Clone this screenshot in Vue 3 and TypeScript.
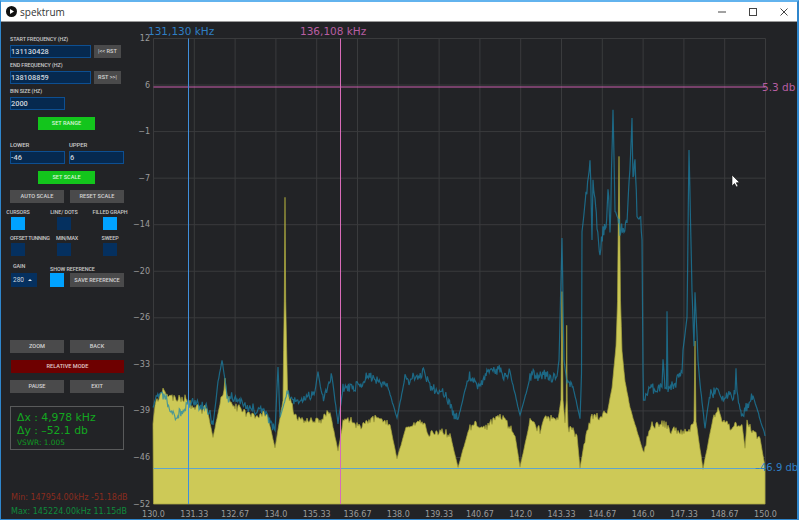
<template>
  <div class="window">
    <header class="titlebar">
      <svg class="app-icon" width="11" height="11" viewBox="0 0 11 11">
        <circle cx="5.5" cy="5.5" r="5.5" fill="#111" />
        <path d="M4 3 L8 5.5 L4 8 Z" fill="#fff" />
      </svg>
      <span class="app-name">spektrum</span>
      <div class="win-buttons">
        <svg width="10" height="10" viewBox="0 0 10 10"><path d="M1 5H9" stroke="#444" fill="none" /></svg>
        <svg width="10" height="10" viewBox="0 0 10 10"><rect x="1.5" y="1.5" width="7" height="7" stroke="#444" fill="none" /></svg>
        <svg width="10" height="10" viewBox="0 0 10 10"><path d="M1.5 1.5L8.5 8.5M8.5 1.5L1.5 8.5" stroke="#444" fill="none" /></svg>
      </div>
    </header>

    <main class="body">
      <aside class="side">
        <label class="lbl first">START FREQUENCY (HZ)</label>
        <div class="row">
          <div class="input wide">131130428</div>
          <button class="btn rst">|&lt;&lt; RST</button>
        </div>
        <label class="lbl">END FREQUENCY (HZ)</label>
        <div class="row">
          <div class="input wide">138108859</div>
          <button class="btn rst">RST &gt;&gt;|</button>
        </div>
        <label class="lbl">BIN SIZE (HZ)</label>
        <div class="input half">2000</div>
        <button class="btn green">SET RANGE</button>

        <div class="row two lbl-row">
          <label class="lbl">LOWER</label>
          <label class="lbl">UPPER</label>
        </div>
        <div class="row two">
          <div class="input half">-46</div>
          <div class="input half">6</div>
        </div>
        <button class="btn green second">SET SCALE</button>

        <div class="row pair scale">
          <button class="btn">AUTO SCALE</button>
          <button class="btn">RESET SCALE</button>
        </div>

        <div v-for="(line, i) in checks" :key="i" class="checks">
          <div v-for="c in line" :key="c.name" class="check" :class="{ left: c.left }">
            <span class="lbl">{{ c.name }}</span>
            <span class="box" :class="{ on: c.on }"></span>
          </div>
        </div>

        <div class="gain-row">
          <div class="gain">
            <span class="lbl">GAIN</span>
            <div class="combo">280 <i class="up"></i></div>
          </div>
          <div class="ref">
            <span class="lbl">SHOW REFERENCE</span>
            <div class="ref-line">
              <span class="box on tall"></span>
              <button class="btn save">SAVE REFERENCE</button>
            </div>
          </div>
        </div>

        <div class="row pair zoom">
          <button class="btn">ZOOM</button>
          <button class="btn">BACK</button>
        </div>
        <button class="btn red">RELATIVE MODE</button>
        <div class="row pair pause">
          <button class="btn">PAUSE</button>
          <button class="btn">EXIT</button>
        </div>

        <div class="delta">
          <div class="big">Δx : 4,978 kHz</div>
          <div class="big">Δy : –52.1 db</div>
          <div class="vswr">VSWR: 1.005</div>
        </div>

        <div class="min">Min: 147954.00kHz -51.18dB</div>
        <div class="max">Max: 145224.00kHz 11.15dB</div>
      </aside>

      <svg class="plot" width="672" height="498" viewBox="125 21 672 498">
        <g stroke="#3a3b3d" stroke-width="1">
          <line v-for="x in xTicks" :key="x.label" :x1="x.pos" y1="37.5" :x2="x.pos" y2="503" />
          <line v-for="y in yTicks" :key="y.label" x1="153.5" :y1="y.pos" x2="765.5" :y2="y.pos" />
        </g>

        <path :d="yellowPath" fill="#cdc957" stroke="#a6a33c" stroke-width="0.7" />
        <path :d="bluePath" fill="none" stroke="#1b84ab" stroke-width="1.2" stroke-opacity="0.72" />

        <line x1="153.5" y1="86" x2="765" y2="86" stroke="#cc5fae" stroke-width="1.1" />
        <line x1="153.5" y1="467.5" x2="765" y2="467.5" stroke="#5fa5cc" />
        <line x1="188.5" y1="37.5" x2="188.5" y2="503" stroke="#3f8fdc" />
        <line x1="340.5" y1="37.5" x2="340.5" y2="503" stroke="#d86bb8" />

        <text class="cur" x="148" y="34" fill="#2f7fc4">131,130 kHz</text>
        <text class="cur" x="300" y="34" fill="#b85ea2">136,108 kHz</text>
        <text class="cur" x="762" y="90" fill="#b85ea2">5.3 db</text>
        <text class="cur small" x="755" y="470" fill="#2f7fc4">–46.9 db</text>

        <text v-for="y in yTicks" :key="y.label" class="tick" x="150" :y="y.pos + 2.5" text-anchor="end">{{ y.label }}</text>
        <text v-for="x in xTicks" :key="x.label" class="tick" :x="x.pos" y="516" text-anchor="middle">{{ x.label }}</text>

        <path d="M732 174 L732 185 L734.5 182.5 L736.5 186 L738 185 L736.2 181.8 L739.5 181.5 Z" fill="#fff" stroke="#111" stroke-width="0.6" />
      </svg>
    </main>
  </div>
</template>

<script setup lang="ts">
type Pt = [number, number]

const checks = [
  [
    { name: 'CURSORS', on: true, left: false },
    { name: 'LINE/ DOTS', on: false, left: false },
    { name: 'FILLED GRAPH', on: true, left: false },
  ],
  [
    { name: 'OFFSET TUNNING', on: false, left: true },
    { name: 'MIN/MAX', on: false, left: true },
    { name: 'SWEEP', on: false, left: false },
  ],
]

const xNames = ['130.0', '131.33', '132.67', '134.0', '135.33', '136.67', '138.0', '139.33', '140.67', '142.0', '143.33', '144.67', '146.0', '147.33', '148.67', '150.0']
const xTicks = xNames.map((label, i) => ({ label, pos: 153.5 + i * 40.8 }))

const yNames = ['12', '6', '−1', '−7', '−14', '−20', '−26', '−33', '−39', '−46', '−52']
const yTicks = yNames.map((label, i) => ({ label, pos: 37.5 + i * 46.55 }))

const yellowKeys: Pt[] = [
  [153, 423], [155, 403], [160, 392], [163, 385], [166, 392], [173, 395], [183, 395], [193, 402], [207, 410], [213, 437],
  [220, 403], [224, 392], [225, 380], [226, 392], [228, 400], [240, 410], [257, 413], [268, 418], [275, 448], [280, 417],
  [283, 400], [284.3, 300], [285, 197], [285.7, 300], [287.5, 390], [297, 417], [317, 418], [330, 410], [338, 450], [343, 422],
  [348, 417], [358, 427], [373, 418], [390, 423], [397, 458], [407, 423], [423, 418], [430, 430], [450, 433], [458, 467],
  [470, 425], [487, 430], [497, 413], [503, 420], [515, 433], [520, 465], [530, 420], [540, 430], [548, 415], [558, 420],
  [561, 400], [562, 292], [563, 400], [565, 423], [566.3, 400], [566.7, 325], [567.2, 400], [568, 428], [577, 435], [580, 467],
  [585, 438], [592, 417], [607, 413], [612, 387], [616, 345], [617.5, 300], [618.5, 200], [619, 155], [619.5, 200], [620.5, 300],
  [622, 350], [625, 380], [630, 407], [643, 450], [652, 423], [670, 428], [687, 432], [694, 420], [695, 340], [696, 420],
  [703, 468], [713, 417], [718, 407], [722, 420], [742, 423], [745, 447], [747, 420], [760, 437], [765, 465],
]

const blueKeys: Pt[] = [
  [153, 407], [157, 393], [170, 403], [177, 415], [187, 402], [207, 410], [213, 428], [218, 383], [222, 360], [227, 393],
  [237, 402], [253, 405], [263, 410], [275, 433], [278, 367], [280, 417], [287, 393], [297, 403], [315, 390], [318, 370],
  [322, 395], [332, 377], [338, 423], [343, 387], [357, 383], [370, 373], [387, 383], [397, 418], [405, 377], [425, 375],
  [437, 393], [445, 390], [458, 418], [468, 377], [480, 382], [493, 372], [510, 372], [520, 415], [530, 377], [557, 377],
  [559, 360], [562, 237], [564, 360], [567, 383], [573, 383], [580, 417], [581.5, 372], [582, 230], [583, 222], [586, 190],
  [590, 148], [592, 232], [593, 167], [595, 190], [597, 217], [600, 247], [603, 227], [606, 225], [608, 188], [610, 230], [613, 115], [615, 207],
  [620, 233], [624, 225], [627, 220], [632, 120], [633, 177], [635, 153], [637, 210], [640, 217], [642, 240], [643, 370], [643.5, 403],
  [652, 383], [662, 385], [663, 357], [665, 385], [666.5, 385], [667, 307], [668, 387], [682, 373], [683, 350], [687, 317],
  [689, 148], [692, 290], [694, 345], [695, 292], [697, 333], [698, 360], [700, 383], [705, 427], [710, 390], [718, 383],
  [722, 397], [735, 395], [736, 368], [737, 397], [743, 415], [753, 397], [765, 435],
]

// small repeatable jitter so the traces look like real samples
function trace(keys: Pt[], step: number, amp: number, seed: number, busy?: [number, number]): Pt[] {
  let s = seed
  let slow = 0
  const rand = () => {
    s = (s * 16807) % 2147483647
    return s / 2147483647 - 0.5
  }
  const out: Pt[] = []
  for (let i = 0; i < keys.length - 1; i++) {
    const [x0, y0] = keys[i]
    const [x1, y1] = keys[i + 1]
    const n = Math.max(1, Math.ceil((x1 - x0) / step))
    const steep = Math.abs(y1 - y0) / Math.max(x1 - x0, 0.1) > 3
    const inBusy = busy && x0 > busy[0] && x0 < busy[1]
    const a = inBusy ? amp * 1.5 : steep ? amp * 0.15 : amp
    for (let k = 0; k < n; k++) {
      const t = k / n
      slow = 0.88 * slow + rand() * a * 0.55
      out.push([x0 + (x1 - x0) * t, y0 + (y1 - y0) * t + slow + rand() * a])
    }
  }
  out.push(keys[keys.length - 1])
  return out
}

const toD = (pts: Pt[]) => pts.map((p, i) => `${i ? 'L' : 'M'}${p[0].toFixed(1)} ${p[1].toFixed(1)}`).join(' ')

const yellowPath = `M153.5 503 ${toD(trace(yellowKeys, 1, 7, 4711)).replace('M', 'L')} L765 503 Z`
const bluePath = toD(trace(blueKeys, 0.8, 9, 1234, [583, 642]))
</script>

<style>
html,
body {
  background: #fff;
}
</style>

<style scoped>
.window {
  width: 799px;
  height: 520px;
  box-sizing: border-box;
  border-top: 2px solid #62b3ee;
  border-left: 1px solid #2f86cc;
  border-right: 2px solid #2f86cc;
  border-bottom: 1px solid #2f86cc;
  display: flex;
  flex-direction: column;
  overflow: hidden;
  background: #222326;
}
.titlebar {
  height: 19px;
  flex: none;
  background: #fff;
  border-bottom: 1px solid #9a9a9a;
  display: flex;
  align-items: center;
  padding-left: 5px;
}
.app-name {
  margin-left: 3px;
  font: 10px "Open Sans", sans-serif;
  color: #333;
}
.win-buttons {
  margin-left: auto;
  display: flex;
  gap: 21px;
  margin-right: 8px;
}
.body {
  flex: 1;
  display: flex;
  min-height: 0;
}
.side {
  width: 124px;
  flex: none;
  box-sizing: border-box;
  padding-left: 9px;
  display: flex;
  flex-direction: column;
  align-items: flex-start;
  font-family: Roboto, sans-serif;
}
.plot {
  flex: none;
  display: block;
}
.lbl {
  display: block;
  font-size: 5.4px;
  font-weight: 500;
  line-height: 6px;
  height: 6px;
  margin: 4px 0 3px;
  color: #c9c9c9;
  white-space: nowrap;
  letter-spacing: -0.1px;
}
.lbl.first {
  margin-top: 14px;
}
.row {
  display: flex;
  gap: 3px;
}
.input {
  box-sizing: border-box;
  height: 13px;
  background: #06294f;
  border: 1px solid #0d4f92;
  color: #cfd6de;
  font-size: 7.4px;
  font-weight: 500;
  line-height: 11px;
  padding-left: 0;
}
.wide {
  width: 81px;
}
.half {
  width: 55px;
}
.btn {
  box-sizing: border-box;
  height: 13px;
  padding: 0;
  border: 0;
  border-radius: 0;
  background: #4a4a4b;
  color: #d4d4d4;
  font-family: Roboto, sans-serif;
  font-size: 5.6px;
  font-weight: 500;
  line-height: 13px;
  white-space: nowrap;
}
.rst {
  width: 27px;
}
.green {
  width: 57px;
  margin: 7px 0 0 28px;
  background: #13c51c;
  color: #d9f5d9;
}
.second {
  margin-top: 7px;
}
.two {
  gap: 4px;
}
.lbl-row {
  margin-top: 8px;
}
.lbl-row .lbl {
  width: 55px;
  font-size: 6px;
}
.pair {
  gap: 6px;
}
.pair .btn {
  width: 54px;
}
.scale {
  margin-top: 6px;
}
.checks {
  display: grid;
  grid-template-columns: 46px 46px 46px;
  width: 114px;
  margin-top: 2px;
  margin-left: 1px;
}
.checks + .checks {
  margin-top: 1px;
}
.check {
  display: flex;
  flex-direction: column;
  align-items: center;
  width: 14px;
}
.check.left {
  align-items: flex-start;
}
.check.left .lbl {
  margin-left: -1px;
  letter-spacing: -0.3px;
}
.check .lbl {
  margin-bottom: 2px;
}
.box {
  display: block;
  width: 14px;
  height: 13px;
  background: #05305f;
}
.check.left .box {
  margin-left: 0;
}
.box.tall {
  height: 14px;
}
.box.on {
  background: #00a2ff;
}
.gain-row {
  display: flex;
  margin-top: 2px;
}
.gain {
  width: 40px;
  flex: none;
  margin-left: 1px;
}
.gain .lbl {
  margin: 5px 0 4px 2px;
}
.combo {
  box-sizing: border-box;
  width: 26px;
  height: 14px;
  background: #05305f;
  color: #cfd6de;
  font-size: 6.5px;
  line-height: 14px;
  padding-left: 2px;
  display: flex;
  align-items: center;
  gap: 4px;
}
.up {
  width: 0;
  height: 0;
  border-left: 2px solid transparent;
  border-right: 2px solid transparent;
  border-bottom: 2px solid #dfe5ea;
}
.ref .lbl {
  margin: 5px 0 1px;
}
.ref {
  margin-top: 3px;
  margin-left: -1px;
}
.ref-line {
  display: flex;
  gap: 6px;
}
.save {
  width: 54px;
  height: 14px;
}
.zoom {
  margin-top: 53px;
}
.red {
  width: 113px;
  margin: 7px 0 7px 1px;
  background: #6e0000;
  color: #e0c8c8;
}
.delta {
  box-sizing: border-box;
  width: 114px;
  height: 44px;
  margin-top: 13px;
  border: 1px solid #595a5b;
  padding: 4px 0 0 6px;
  font-family: "DejaVu Sans", sans-serif;
  color: #12a820;
}
.big {
  font-size: 10.8px;
  line-height: 13px;
  white-space: nowrap;
}
.vswr {
  font-size: 7.4px;
  line-height: 12px;
  color: #0f9a22;
}
.min,
.max {
  font-family: "DejaVu Sans", sans-serif;
  font-size: 8px;
  white-space: nowrap;
  margin-left: 1px;
}
.min {
  margin-top: 43px;
  color: #8a2c1e;
}
.max {
  margin-top: 5px;
  color: #0e8a3c;
}
.cur {
  font-family: "DejaVu Sans", sans-serif;
  font-size: 10.5px;
}
.cur.small {
  font-size: 10px;
}
.tick {
  font-family: "DejaVu Sans", sans-serif;
  font-size: 8px;
  fill: #9c9c9c;
}
</style>
